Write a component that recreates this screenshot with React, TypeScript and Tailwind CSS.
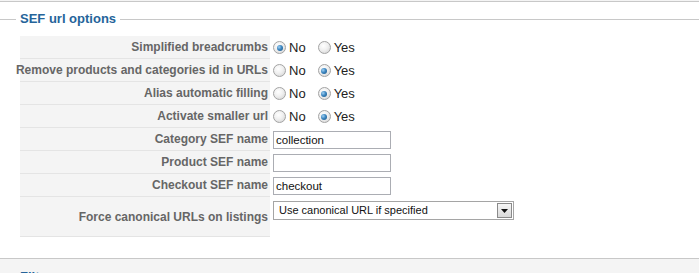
import React from "react";

const font = { fontFamily: '"Liberation Sans", Arial, sans-serif' };

function Radio({ checked }: { checked: boolean }) {
  return (
    <span className="relative inline-block w-[13px] h-[13px] rounded-full border border-[#a3a3a3] bg-[radial-gradient(circle_at_40%_35%,#ffffff_0%,#f0f0f0_45%,#cfcfcf_100%)] shrink-0">
      {checked && (
        <span className="absolute left-[2.5px] top-[2.5px] w-[6px] h-[6px] rounded-full bg-[radial-gradient(circle_at_35%_35%,#9fd0f2_0%,#3d86c0_45%,#14507f_100%)]" />
      )}
    </span>
  );
}

function YesNo({ yes }: { yes: boolean }) {
  return (
    <div className="flex items-center text-[13px] text-[#222]">
      <Radio checked={!yes} />
      <span className="ml-[3px]">No</span>
      <span className="ml-[12px]" />
      <Radio checked={yes} />
      <span className="ml-[3px]">Yes</span>
    </div>
  );
}

function Row({ label, children, h = "h-[23px]", top = false }: { label: string; children: React.ReactNode; h?: string; top?: boolean }) {
  return (
    <div className={`flex ${h}`}>
      <div className="w-[250px] shrink-0 flex items-center justify-end pr-[2px] bg-[#f4f4f4] border-b border-[#e4e4e4] text-[12px] font-bold text-[#666] whitespace-nowrap">
        {label}
      </div>
      <div className={`flex-1 flex ${top ? "items-start pt-[4px]" : "items-center"} pl-[3px]`}>{children}</div>
    </div>
  );
}

function TextInput({ value }: { value: string }) {
  return (
    <div className="w-[118px] h-[18px] border border-[#abadb3] bg-white text-[11.5px] text-[#111] leading-[16px] pl-[2px]">
      {value}
    </div>
  );
}

export default function App() {
  return (
    <div className="w-[699px] h-[273px] bg-white overflow-hidden relative" style={font}>
      <div className="h-[2px] bg-[#f4f4f4] border-b border-[#c8c8c8]" />
      <div className="flex items-center h-[34px]">
        <div className="w-[16px] h-px bg-[#c8c8c8]" />
        <span className="px-[4px] text-[13px] font-bold text-[#25649a]">SEF url options</span>
        <div className="flex-1 h-px bg-[#c8c8c8]" />
      </div>
      <div className="ml-[20px]">
        <Row label="Simplified breadcrumbs"><YesNo yes={false} /></Row>
        <Row label="Remove products and categories id in URLs"><YesNo yes={true} /></Row>
        <Row label="Alias automatic filling"><YesNo yes={true} /></Row>
        <Row label="Activate smaller url"><YesNo yes={true} /></Row>
        <Row label="Category SEF name"><TextInput value="collection" /></Row>
        <Row label="Product SEF name"><TextInput value="" /></Row>
        <Row label="Checkout SEF name"><TextInput value="checkout" /></Row>
        <Row label="Force canonical URLs on listings" h="h-[40px]" top>
          <div className="w-[241px] h-[19px] border border-[#a5a5a5] bg-white flex items-center text-[11px] text-[#111]">
            <span className="flex-1 pl-[5px]">Use canonical URL if specified</span>
            <span className="w-[15px] h-[15px] mr-[1px] border border-[#8a8a8a] bg-[linear-gradient(#f6f6f6,#d9d9d9)] flex items-center justify-center">
              <svg width="7" height="4" viewBox="0 0 7 4"><path d="M0 0h7L3.5 4z" fill="#111" /></svg>
            </span>
          </div>
        </Row>
      </div>
      <div className="absolute left-0 right-0 top-[258px] bottom-0 border-t border-[#c8c8c8] bg-[#f4f4f4]">
        <span className="absolute left-[20px] top-[8px] text-[13px] font-bold text-[#25649a]">Filters</span>
      </div>
    </div>
  );
}
